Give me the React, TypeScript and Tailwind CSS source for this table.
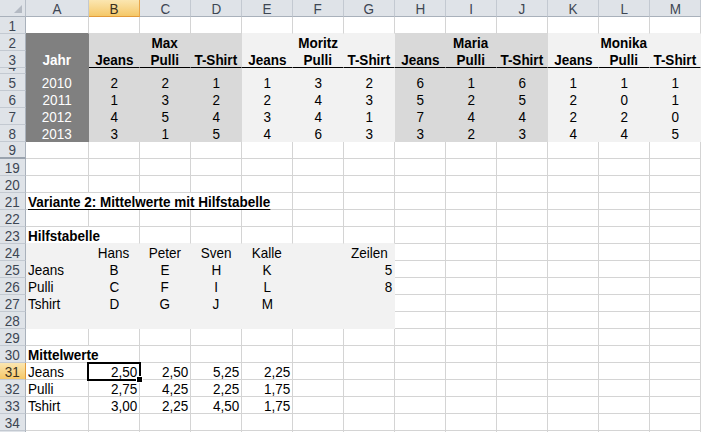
import React from 'react';

type Fill = 'dark' | 'mid' | 'light';
type Line = Fill | 'grid' | 'black' | 'none';
type Txt = { t: string; a: 'l' | 'c' | 'r'; b?: boolean; u?: boolean; w?: boolean };

const COLS = ['A', 'B', 'C', 'D', 'E', 'F', 'G', 'H', 'I', 'J', 'K', 'L', 'M'];
const ROWS = [1, 2, 3, 4, 5, 6, 7, 8, 9, 19, 20, 21, 22, 23, 24, 25, 26, 27, 28, 29, 30, 31, 32, 33, 34, 35];

const BG: Record<Fill, string> = { dark: 'bg-[#808080]', mid: 'bg-[#d9d9d9]', light: 'bg-[#f2f2f2]' };
const BR: Record<Line, string> = {
  dark: 'border-r-[#808080]',
  mid: 'border-r-[#d9d9d9]',
  light: 'border-r-[#f2f2f2]',
  grid: 'border-r-[#d4d4d4]',
  black: 'border-r-black',
  none: 'border-r-transparent',
};
const BB: Record<Line, string> = {
  dark: 'border-b-[#808080]',
  mid: 'border-b-[#d9d9d9]',
  light: 'border-b-[#f2f2f2]',
  grid: 'border-b-[#d4d4d4]',
  black: 'border-b-black',
  none: 'border-b-transparent',
};
const ALIGN = { l: 'justify-start pl-[2px]', c: 'justify-center', r: 'justify-end pr-[2px]' };
// the sheet's font is a bit narrow: 15px high, 13.5px wide
const SQUEEZE = { l: 'origin-left', c: 'origin-center', r: 'origin-right' };

const sales = [
  [2010, 2, 2, 1, 1, 3, 2, 6, 1, 6, 1, 1, 1],
  [2011, 1, 3, 2, 2, 4, 3, 5, 2, 5, 2, 0, 1],
  [2012, 4, 5, 4, 3, 4, 1, 7, 4, 4, 2, 2, 0],
  [2013, 3, 1, 5, 4, 6, 3, 3, 2, 3, 4, 4, 5],
];

const cells: Record<string, Txt> = {};
const put = (r: number, c: number, t: string, a: Txt['a'], extra: Partial<Txt> = {}) => {
  cells[`${r}-${c}`] = { t, a, ...extra };
};

['Max', 'Moritz', 'Maria', 'Monika'].forEach((n, g) => {
  put(2, 2 + g * 3, n, 'c', { b: true });
  put(3, 1 + g * 3, 'Jeans', 'c', { b: true });
  put(3, 2 + g * 3, 'Pulli', 'c', { b: true });
  put(3, 3 + g * 3, 'T-Shirt', 'c', { b: true });
});
put(3, 0, 'Jahr', 'c', { b: true, w: true });
sales.forEach((row, i) => {
  row.forEach((v, c) => put(5 + i, c, String(v), 'c', c === 0 ? { w: true } : {}));
});

put(21, 0, 'Variante 2: Mittelwerte mit Hilfstabelle', 'l', { b: true, u: true });
put(23, 0, 'Hilfstabelle', 'l', { b: true });
['Hans', 'Peter', 'Sven', 'Kalle'].forEach((n, i) => put(24, 1 + i, n, 'c'));
put(24, 6, 'Zeilen', 'c');
[
  ['Jeans', 'B', 'E', 'H', 'K'],
  ['Pulli', 'C', 'F', 'I', 'L'],
  ['Tshirt', 'D', 'G', 'J', 'M'],
].forEach((row, i) => row.forEach((v, c) => put(25 + i, c, v, c === 0 ? 'l' : 'c')));
put(25, 6, '5', 'r');
put(26, 6, '8', 'r');

put(30, 0, 'Mittelwerte', 'l', { b: true });
[
  ['Jeans', '2,50', '2,50', '5,25', '2,25'],
  ['Pulli', '2,75', '4,25', '2,25', '1,75'],
  ['Tshirt', '3,00', '2,25', '4,50', '1,75'],
].forEach((row, i) => row.forEach((v, c) => put(31 + i, c, v, c === 0 ? 'l' : 'r')));

// text spilling over into the empty cells to the right hides those gridlines
const spill: Record<number, number> = { 21: 3, 23: 0, 30: 0 };

function fill(r: number, c: number): Fill | null {
  if (c > 12) return null;
  if (r >= 2 && r <= 8) {
    if (c === 0) return 'dark';
    return Math.floor((c - 1) / 3) % 2 === 0 ? 'mid' : 'light';
  }
  if (r >= 24 && r <= 28 && c <= 6) return 'light';
  return null;
}

function Cell({ r, c, next }: { r: number; c: number; next: number }) {
  const f = fill(r, c);
  const bottom: Line = r === 3 && c >= 1 ? 'black' : f ?? fill(next, c) ?? 'grid';
  const right: Line = spill[r] !== undefined && c <= spill[r] ? 'none' : f ?? fill(r, c + 1) ?? 'grid';
  const txt = cells[`${r}-${c}`];
  const selected = r === 31 && c === 1;
  return (
    <div
      className={`flex shrink-0 items-end border-r border-b ${c === 0 ? 'w-[63px]' : 'w-[51px]'} ${
        r === 4 ? 'h-[6px] overflow-hidden' : 'h-[17px]'
      } ${f ? BG[f] : ''} ${BR[right]} ${BB[bottom]} ${txt ? ALIGN[txt.a] : ''} ${selected ? 'relative' : ''}`}
    >
      {txt && (
        <span
          className={`-mb-[2px] inline-block scale-x-[0.9] whitespace-nowrap leading-[18px] ${SQUEEZE[txt.a]} ${
            txt.b ? 'font-bold' : ''
          } ${txt.u ? 'underline decoration-1 underline-offset-[2px]' : ''} ${txt.w ? 'text-white' : 'text-black'}`}
        >
          {txt.t}
        </span>
      )}
      {selected && (
        <div className="pointer-events-none absolute -top-[1px] -left-[2px] z-10 h-[19px] w-[54px] border-2 border-black">
          <div className="absolute top-[12px] left-[47px] h-[7px] w-[7px] border border-white bg-black" />
        </div>
      )}
    </div>
  );
}

export default function App() {
  return (
    <div className="h-[432px] w-[701px] overflow-hidden bg-white font-['Liberation_Sans',Arial,sans-serif] text-[15px]">
      <div className="flex">
        <div className="relative h-[17px] w-[26px] shrink-0 border-r border-b border-r-[#b7bec7] border-b-[#a9b1bb] bg-[#dfe3e8]">
          <svg className="absolute top-0 left-0" width="25" height="16" viewBox="0 0 25 16">
            <polygon points="22,5 22,13 14,13" fill="#b4bac3" />
          </svg>
        </div>
        {COLS.map((l, c) => (
          <div
            key={l}
            className={`flex h-[17px] shrink-0 items-end justify-center border-r border-b ${
              c === 0 ? 'w-[63px]' : 'w-[51px]'
            } ${
              c === 1
                ? 'bg-linear-to-b from-[#fbe6b0] to-[#f5c867] border-r-[#e9a64a] border-b-[#e29a3a] text-[#3a3020]'
                : 'bg-[#dfe3e8] border-r-[#c3c9d1] border-b-[#a9b1bb] text-[#3d4653]'
            }`}
          >
            <span className="-mb-[2px] inline-block scale-x-[0.9] leading-[18px]">{l}</span>
          </div>
        ))}
      </div>
      {ROWS.map((r, i) => {
        const next = ROWS[i + 1] ?? 36;
        return (
          <div key={r} className="flex">
            <div
              className={`flex w-[26px] shrink-0 items-end justify-center border-r ${
                r === 9 ? 'border-b-2 border-b-[#9aa3ae]' : 'border-b border-b-[#c3c9d1]'
              } ${r === 4 ? 'h-[6px] overflow-hidden' : 'h-[17px]'} ${
                r === 31
                  ? 'bg-linear-to-b from-[#fbe6b0] to-[#f5c867] border-r-[#e29a3a] text-[#3a3020]'
                  : 'bg-[#dfe3e8] border-r-[#a9b1bb] text-[#3d4653]'
              }`}
            >
              <span className="-mb-[2px] inline-block scale-x-[0.9] leading-[18px]">{r}</span>
            </div>
            {COLS.map((_, c) => (
              <Cell key={c} r={r} c={c} next={next} />
            ))}
          </div>
        );
      })}
    </div>
  );
}
